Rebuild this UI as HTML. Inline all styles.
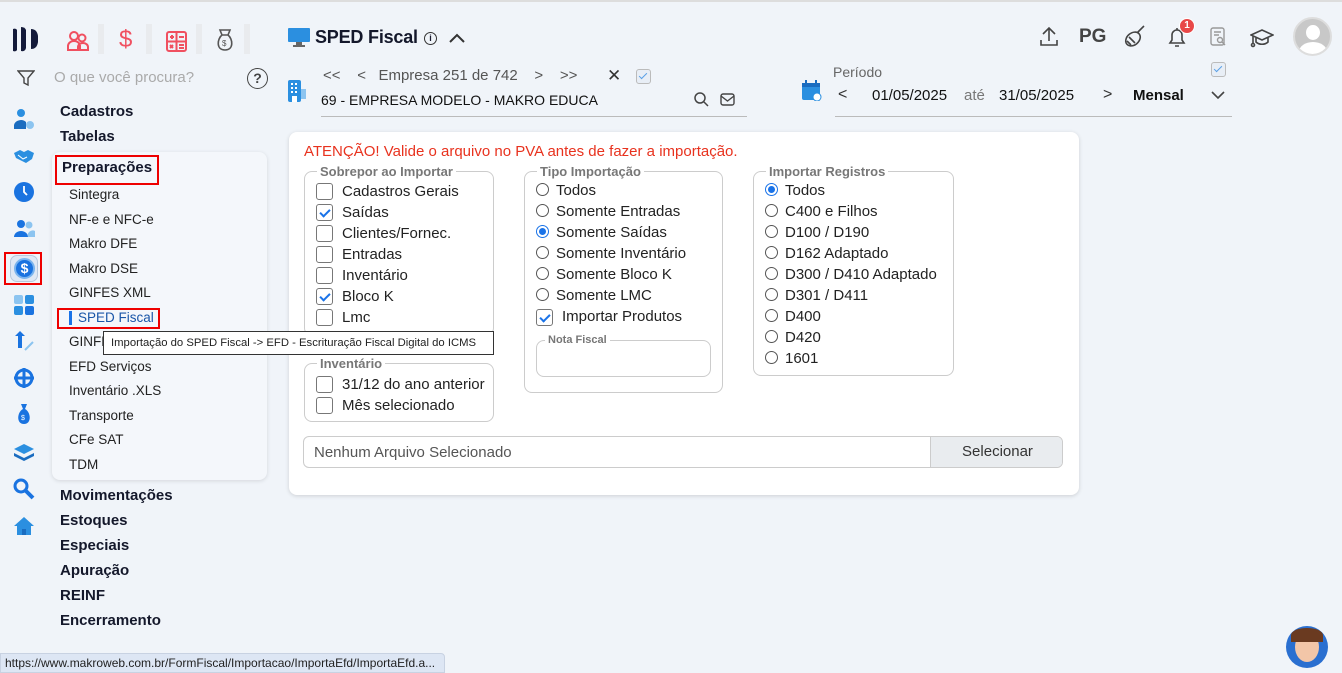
<!DOCTYPE html>
<html><head><meta charset="utf-8"><style>
*{box-sizing:border-box;margin:0;padding:0}
body{width:1342px;height:673px;overflow:hidden;background:#f0f4f9;font-family:"Liberation Sans",sans-serif;color:#1a1a2e;position:relative}
.a{position:absolute;white-space:nowrap}
.b{font-weight:bold;font-size:15px;color:#14182b}
.m{font-size:13.5px;color:#222}
.ic{position:absolute;left:13px;width:22px;height:22px}
.cb{position:absolute;width:17px;height:17px;border:1px solid #777;border-radius:3px;background:#fff}
.cb.k::after{content:"";position:absolute;left:5px;top:2px;width:4px;height:8px;border:solid #1a73e8;border-width:0 2px 2px 0;transform:rotate(45deg)}
.rd{position:absolute;width:13px;height:13px;border:1px solid #555;border-radius:50%;background:#fff}
.rd.k{border-color:#1a73e8}
.rd.k::after{content:"";position:absolute;left:2px;top:2px;width:7px;height:7px;border-radius:50%;background:#1a73e8}
.f{font-size:15px;color:#222}
fieldset{position:absolute;border:1px solid #ccc;border-radius:8px}
legend{font-size:13px;font-weight:bold;color:#777;padding:0 3px;margin-left:12px}
</style></head><body>
<div class="a" style="left:0;top:0;width:1342px;height:2px;background:#ddd"></div>
<!-- logo -->
<svg class="a" style="left:12px;top:26px" width="27" height="26" viewBox="0 0 27 26" fill="#141a3a"><path d="M1 3q3-1 4 1v20q-1 2-4 1z"/><path d="M9 1q4 0 5 3v18q-1 4-5 3z"/><path d="M19 3q6 0 7 7v6q-1 7-7 7z"/></svg>
<!-- top module icons -->
<div class="a" style="left:98px;top:24px;width:6px;height:30px;background:#e9ebee"></div>
<div class="a" style="left:146px;top:24px;width:6px;height:30px;background:#e9ebee"></div>
<div class="a" style="left:196px;top:24px;width:6px;height:30px;background:#e9ebee"></div>
<div class="a" style="left:244px;top:24px;width:6px;height:30px;background:#e9ebee"></div>
<svg class="a" style="left:66px;top:30px" width="24" height="22" viewBox="0 0 24 22" fill="none" stroke="#f05060" stroke-width="2"><circle cx="8" cy="6" r="4"/><circle cx="16" cy="8" r="3.5"/><path d="M2 20v-4a6 5 0 0 1 12 0v4zM12 20v-3a5 4 0 0 1 10 0v3z"/></svg>
<div class="a" style="left:119px;top:26px;font-size:24px;color:#f05060">$</div>
<svg class="a" style="left:166px;top:31px" width="21" height="21" viewBox="0 0 21 21" fill="none" stroke="#f05060" stroke-width="2"><rect x="1" y="1" width="19" height="19" rx="2"/><path d="M10.5 1v19M1 10.5h19M4 6h4M6 4v4M13 6h5M4 14l3 3M7 14l-3 3M13 14h5M13 17h5"/></svg>
<svg class="a" style="left:215px;top:29px" width="20" height="23" viewBox="0 0 20 23" fill="none" stroke="#555" stroke-width="1.6"><path d="M7 6L5 1h10l-2 5M7 6h6M7 6c-5 4-6 15 3 15s8-11 3-15"/><text x="7" y="17" font-size="8" fill="#555" stroke="none">$</text></svg>
<!-- title -->
<svg class="a" style="left:288px;top:28px" width="22" height="20" viewBox="0 0 22 20"><rect x="0" y="0" width="22" height="14" rx="1" fill="#2b8fe0"/><rect x="8" y="14" width="6" height="3" fill="#666"/><rect x="5" y="17" width="12" height="2" fill="#666"/></svg>
<div class="a" style="left:315px;top:27px;font-size:18px;font-weight:bold;color:#14182b;letter-spacing:-0.2px">SPED Fiscal</div>
<div class="a" style="left:424px;top:32px;width:13px;height:13px;border:1.3px solid #333;border-radius:50%;font-size:9px;text-align:center;line-height:11px;font-weight:bold">i</div>
<svg class="a" style="left:448px;top:32px" width="18" height="12" viewBox="0 0 18 12" fill="none" stroke="#333" stroke-width="2"><path d="M2 10l7-7 7 7"/></svg>
<!-- search -->
<svg class="a" style="left:17px;top:70px" width="18" height="17" viewBox="0 0 18 17" fill="none" stroke="#444" stroke-width="1.4"><path d="M1 1h16l-6 7v7l-4-2V8z"/></svg>
<div class="a" style="left:54px;top:69px;font-size:15px;color:#aaa">O que você procura?</div>
<div class="a" style="left:247px;top:68px;width:21px;height:21px;border:1.6px solid #444;border-radius:50%;text-align:center;font-size:14px;line-height:18px;color:#444;font-weight:bold">?</div>
<!-- empresa -->
<svg class="a" style="left:288px;top:80px" width="18" height="22" viewBox="0 0 18 22"><rect x="0" y="0" width="13" height="22" rx="2" fill="#2b8fe0"/><rect x="13" y="9" width="5" height="10" fill="#8cc4f0"/><g fill="#fff"><rect x="3" y="3" width="2" height="2"/><rect x="7" y="3" width="2" height="2"/><rect x="3" y="7" width="2" height="2"/><rect x="7" y="7" width="2" height="2"/><rect x="3" y="11" width="2" height="2"/><rect x="7" y="11" width="2" height="2"/><rect x="4" y="16" width="5" height="6"/></g></svg>
<div class="a" style="left:323px;top:67px;font-size:15px;color:#555">&lt;&lt;&nbsp;&nbsp;&nbsp;&nbsp;&lt;&nbsp;&nbsp;&nbsp;Empresa 251 de 742&nbsp;&nbsp;&nbsp;&nbsp;&gt;&nbsp;&nbsp;&nbsp;&nbsp;&gt;&gt;</div>
<div class="a" style="left:607px;top:66px;font-size:17px;color:#333">✕</div>
<div class="a" style="left:636px;top:69px;width:15px;height:15px;border:1px solid #bbb;border-radius:3px;background:#e8eef6"></div>
<div class="a" style="left:641px;top:71px;width:4px;height:8px;border:solid #5aa0e6;border-width:0 1.5px 1.5px 0;transform:rotate(45deg)"></div>
<div class="a" style="left:321px;top:92px;font-size:14px;color:#111">69 - EMPRESA MODELO - MAKRO EDUCA</div>
<svg class="a" style="left:694px;top:92px" width="15" height="15" viewBox="0 0 15 15" fill="none" stroke="#444" stroke-width="1.5"><circle cx="6" cy="6" r="5"/><path d="M10 10l4 4"/></svg>
<svg class="a" style="left:720px;top:93px" width="15" height="13" viewBox="0 0 15 13" fill="none" stroke="#444" stroke-width="1.4"><rect x="1" y="1" width="13" height="11" rx="2"/><path d="M1 3l6.5 5L14 3"/></svg>
<div class="a" style="left:321px;top:116px;width:426px;height:1px;background:#bbb"></div>
<!-- periodo -->
<svg class="a" style="left:802px;top:80px" width="20" height="21" viewBox="0 0 20 21"><rect x="0" y="3" width="18" height="17" rx="2" fill="#2b8fe0"/><rect x="0" y="3" width="18" height="4" fill="#1a6cc0"/><rect x="3" y="0" width="2" height="5" fill="#1a6cc0"/><rect x="13" y="0" width="2" height="5" fill="#1a6cc0"/><circle cx="15" cy="17" r="4" fill="#fff" stroke="#2b8fe0"/></svg>
<div class="a" style="left:833px;top:64px;font-size:14px;color:#666">Período</div>
<div class="a" style="left:1211px;top:62px;width:15px;height:15px;border:1px solid #bbb;border-radius:3px;background:#e8eef6"></div>
<div class="a" style="left:1216px;top:64px;width:4px;height:8px;border:solid #5aa0e6;border-width:0 1.5px 1.5px 0;transform:rotate(45deg)"></div>
<div class="a" style="left:838px;top:86px;font-size:16px;color:#333">&lt;</div>
<div class="a" style="left:872px;top:87px;font-size:15px;color:#111">01/05/2025</div>
<div class="a" style="left:964px;top:87px;font-size:15px;color:#777">até</div>
<div class="a" style="left:999px;top:87px;font-size:15px;color:#111">31/05/2025</div>
<div class="a" style="left:1103px;top:86px;font-size:16px;color:#333">&gt;</div>
<div class="a" style="left:1133px;top:87px;font-size:15px;color:#111;font-weight:bold">Mensal</div>
<svg class="a" style="left:1210px;top:90px" width="16" height="10" viewBox="0 0 16 10" fill="none" stroke="#444" stroke-width="1.6"><path d="M2 2l6 6 6-6"/></svg>
<div class="a" style="left:835px;top:116px;width:397px;height:1px;background:#bbb"></div>
<!-- top right icons -->
<svg class="a" style="left:1039px;top:26px" width="20" height="20" viewBox="0 0 20 20" fill="none" stroke="#444" stroke-width="1.6"><path d="M10 15V2M4 8l6-6 6 6M2 14v5h16v-5"/></svg>
<div class="a" style="left:1079px;top:26px;font-size:19px;color:#444;font-weight:bold">PG</div>
<svg class="a" style="left:1123px;top:25px" width="24" height="24" viewBox="0 0 24 24" fill="none" stroke="#444" stroke-width="1.6"><ellipse cx="10" cy="14" rx="8" ry="6" transform="rotate(-40 10 14)"/><path d="M14 8l7-7M6 12l6 6M4 16l4 4"/></svg>
<svg class="a" style="left:1167px;top:26px" width="20" height="22" viewBox="0 0 20 22" fill="none" stroke="#444" stroke-width="1.6"><path d="M3 17h14l-2-3V9a5 5 0 0 0-10 0v5zM8 20h4M10 2v2"/></svg>
<div class="a" style="left:1179px;top:18px;width:16px;height:16px;background:#e84848;border:1.5px solid #fff;border-radius:50%;color:#fff;font-size:10px;font-weight:bold;text-align:center;line-height:13px">1</div>
<svg class="a" style="left:1210px;top:27px" width="17" height="20" viewBox="0 0 17 20" fill="none" stroke="#999" stroke-width="1.4"><rect x="1" y="1" width="13" height="17" rx="2"/><path d="M4 5h7M4 8h5"/><circle cx="10" cy="13" r="2.5"/><path d="M12 15l3 3"/></svg>
<svg class="a" style="left:1250px;top:28px" width="24" height="20" viewBox="0 0 24 20" fill="none" stroke="#444" stroke-width="1.6"><path d="M1 7l11-5 11 5-11 5zM6 9v5c3 3 9 3 12 0V9M3 8v8"/><circle cx="3" cy="17" r="1.5"/></svg>
<div class="a" style="left:1293px;top:17px;width:39px;height:39px;border-radius:50%;background:#c8c8c8;border:2px solid #ddd;overflow:hidden"><div class="a" style="left:11px;top:6px;width:14px;height:15px;border-radius:50%;background:#fff"></div><div class="a" style="left:4px;top:23px;width:28px;height:20px;border-radius:50% 50% 0 0;background:#fff"></div></div>
<!-- left icon rail -->
<svg class="ic" style="top:108px" viewBox="0 0 22 22"><circle cx="8" cy="5" r="4" fill="#2b8fe0"/><path d="M1 21v-4a7 6 0 0 1 12-3v7z" fill="#1a6cc0"/><circle cx="17" cy="17" r="4" fill="#8cc4f0"/></svg>
<svg class="ic" style="top:145px" viewBox="0 0 22 22"><path d="M1 8l6-3 4 2 4-2 6 3-2 6-6 4-6-3-4-2z" fill="#2b8fe0"/><path d="M5 10l5 4 4-2" stroke="#fff" stroke-width="1" fill="none"/></svg>
<svg class="ic" style="top:181px" viewBox="0 0 22 22"><circle cx="11" cy="11" r="10" fill="#1a73e0"/><path d="M11 5v6l3 3" stroke="#fff" stroke-width="1.8" fill="none"/></svg>
<svg class="ic" style="top:218px" viewBox="0 0 22 22"><circle cx="8" cy="6" r="4" fill="#1a73e0"/><circle cx="16" cy="7" r="3.5" fill="#8cc4f0"/><path d="M1 19a7 6 0 0 1 14 0z" fill="#1a73e0"/><path d="M15 19a5 5 0 0 1 7-6v6z" fill="#8cc4f0"/></svg>
<div class="a" style="left:4px;top:252px;width:38px;height:33px;border:2.5px solid #e00;"></div>
<div class="a" style="left:10px;top:255px;width:28px;height:27px;border-radius:7px;background:#dfe8f4;border:1px solid #b8c8dc"></div>
<div class="a" style="left:14px;top:258px;width:21px;height:21px;border-radius:50%;background:#1a73e0;border:2px solid #7ab4ee;color:#fff;font-size:14px;font-weight:bold;text-align:center;line-height:17px">$</div>
<svg class="ic" style="top:294px" viewBox="0 0 22 22"><rect x="1" y="1" width="9" height="9" rx="2" fill="#8cc4f0"/><rect x="12" y="1" width="9" height="9" rx="2" fill="#2b8fe0"/><rect x="1" y="12" width="9" height="9" rx="2" fill="#2b8fe0"/><rect x="12" y="12" width="9" height="9" rx="2" fill="#1a73e0"/></svg>
<svg class="ic" style="top:330px" viewBox="0 0 22 22"><path d="M7 1l5 5h-3v12H5V6H2z" fill="#1a73e0"/><path d="M12 20l8-8" stroke="#8cc4f0" stroke-width="2"/></svg>
<svg class="ic" style="top:367px" viewBox="0 0 22 22"><circle cx="11" cy="11" r="8" fill="none" stroke="#1a73e0" stroke-width="3"/><path d="M11 1v20M1 11h20" stroke="#1a73e0" stroke-width="3"/></svg>
<svg class="ic" style="top:403px" viewBox="0 0 22 22"><path d="M8 1h6l-2 5c6 3 7 15-1 15S4 9 10 6z" fill="#1a73e0"/><text x="8" y="17" font-size="7" fill="#fff">$</text></svg>
<svg class="ic" style="top:441px" viewBox="0 0 22 22"><path d="M11 3l10 5-10 5-10-5z" fill="#2b8fe0"/><path d="M1 12l10 5 10-5v3l-10 5-10-5z" fill="#1a6cc0"/></svg>
<svg class="ic" style="top:478px" viewBox="0 0 22 22"><circle cx="8" cy="8" r="6" fill="none" stroke="#1a73e0" stroke-width="3"/><path d="M12 12l8 8" stroke="#1a73e0" stroke-width="4"/></svg>
<svg class="ic" style="top:515px" viewBox="0 0 22 22"><path d="M11 2l10 9h-3v9H4v-9H1z" fill="#2b8fe0"/><rect x="9" y="14" width="4" height="6" fill="#1a6cc0"/></svg>
<!-- menu -->
<div class="a b" style="left:60px;top:103px">Cadastros</div>
<div class="a b" style="left:60px;top:128px">Tabelas</div>
<div class="a" style="left:52px;top:152px;width:215px;height:328px;background:#f4f7fb;border-radius:8px;box-shadow:0 1px 4px rgba(0,0,0,.12)"></div>
<div class="a" style="left:55px;top:155px;width:104px;height:30px;border:2.5px solid #e00"></div>
<div class="a b" style="left:62px;top:159px">Preparações</div>
<div class="a m" style="left:69px;top:187px">Sintegra</div>
<div class="a m" style="left:69px;top:212px">NF-e e NFC-e</div>
<div class="a m" style="left:69px;top:236px">Makro DFE</div>
<div class="a m" style="left:69px;top:261px">Makro DSE</div>
<div class="a m" style="left:69px;top:285px">GINFES XML</div>
<div class="a" style="left:57px;top:308px;width:103px;height:21px;border:2.5px solid #e00"></div>
<div class="a" style="left:69px;top:311px;width:3px;height:14px;background:#1a73e8"></div>
<div class="a m" style="left:78px;top:310px;color:#1a56a8">SPED Fiscal</div>
<div class="a m" style="left:69px;top:334px">GINFES</div>
<div class="a m" style="left:69px;top:359px">EFD Serviços</div>
<div class="a m" style="left:69px;top:383px">Inventário .XLS</div>
<div class="a m" style="left:69px;top:408px">Transporte</div>
<div class="a m" style="left:69px;top:432px">CFe SAT</div>
<div class="a m" style="left:69px;top:457px">TDM</div>
<div class="a b" style="left:60px;top:487px">Movimentações</div>
<div class="a b" style="left:60px;top:512px">Estoques</div>
<div class="a b" style="left:60px;top:537px">Especiais</div>
<div class="a b" style="left:60px;top:562px">Apuração</div>
<div class="a b" style="left:60px;top:587px">REINF</div>
<div class="a b" style="left:60px;top:612px">Encerramento</div>
<!-- main card -->
<div class="a" style="left:289px;top:132px;width:790px;height:363px;background:#fff;border-radius:8px;box-shadow:0 1px 4px rgba(0,0,0,.15)"></div>
<div class="a" style="left:304px;top:143px;font-size:15px;color:#e8321e">ATENÇÃO! Valide o arquivo no PVA antes de fazer a importação.</div>
<fieldset style="left:304px;top:164px;width:190px;height:172px"><legend>Sobrepor ao Importar</legend></fieldset>
<div class="cb" style="left:316px;top:183px"></div><div class="a f" style="left:342px;top:183px">Cadastros Gerais</div>
<div class="cb k" style="left:316px;top:204px"></div><div class="a f" style="left:342px;top:204px">Saídas</div>
<div class="cb" style="left:316px;top:225px"></div><div class="a f" style="left:342px;top:225px">Clientes/Fornec.</div>
<div class="cb" style="left:316px;top:246px"></div><div class="a f" style="left:342px;top:246px">Entradas</div>
<div class="cb" style="left:316px;top:267px"></div><div class="a f" style="left:342px;top:267px">Inventário</div>
<div class="cb k" style="left:316px;top:288px"></div><div class="a f" style="left:342px;top:288px">Bloco K</div>
<div class="cb" style="left:316px;top:309px"></div><div class="a f" style="left:342px;top:309px">Lmc</div>
<fieldset style="left:304px;top:356px;width:190px;height:66px"><legend>Inventário</legend></fieldset>
<div class="cb" style="left:316px;top:376px"></div><div class="a f" style="left:342px;top:376px">31/12 do ano anterior</div>
<div class="cb" style="left:316px;top:397px"></div><div class="a f" style="left:342px;top:397px">Mês selecionado</div>
<fieldset style="left:524px;top:164px;width:199px;height:229px"><legend>Tipo Importação</legend></fieldset>
<div class="rd" style="left:536px;top:183px"></div><div class="a f" style="left:556px;top:182px">Todos</div>
<div class="rd" style="left:536px;top:204px"></div><div class="a f" style="left:556px;top:203px">Somente Entradas</div>
<div class="rd k" style="left:536px;top:225px"></div><div class="a f" style="left:556px;top:224px">Somente Saídas</div>
<div class="rd" style="left:536px;top:246px"></div><div class="a f" style="left:556px;top:245px">Somente Inventário</div>
<div class="rd" style="left:536px;top:267px"></div><div class="a f" style="left:556px;top:266px">Somente Bloco K</div>
<div class="rd" style="left:536px;top:288px"></div><div class="a f" style="left:556px;top:287px">Somente LMC</div>
<div class="cb k" style="left:536px;top:309px"></div><div class="a f" style="left:562px;top:308px">Importar Produtos</div>
<fieldset style="left:536px;top:334px;width:175px;height:43px"><legend style="font-size:11px;margin-left:8px">Nota Fiscal</legend></fieldset>
<fieldset style="left:753px;top:164px;width:201px;height:212px"><legend>Importar Registros</legend></fieldset>
<div class="rd k" style="left:765px;top:183px"></div><div class="a f" style="left:785px;top:182px">Todos</div>
<div class="rd" style="left:765px;top:204px"></div><div class="a f" style="left:785px;top:203px">C400 e Filhos</div>
<div class="rd" style="left:765px;top:225px"></div><div class="a f" style="left:785px;top:224px">D100 / D190</div>
<div class="rd" style="left:765px;top:246px"></div><div class="a f" style="left:785px;top:245px">D162 Adaptado</div>
<div class="rd" style="left:765px;top:267px"></div><div class="a f" style="left:785px;top:266px">D300 / D410 Adaptado</div>
<div class="rd" style="left:765px;top:288px"></div><div class="a f" style="left:785px;top:287px">D301 / D411</div>
<div class="rd" style="left:765px;top:309px"></div><div class="a f" style="left:785px;top:308px">D400</div>
<div class="rd" style="left:765px;top:330px"></div><div class="a f" style="left:785px;top:329px">D420</div>
<div class="rd" style="left:765px;top:351px"></div><div class="a f" style="left:785px;top:350px">1601</div>
<div class="a" style="left:303px;top:436px;width:760px;height:32px;border:1px solid #ccc;border-radius:6px;overflow:hidden;background:#fff">
<div class="a" style="left:10px;top:7px;font-size:15px;color:#555">Nenhum Arquivo Selecionado</div>
<div class="a" style="left:626px;top:0;width:134px;height:32px;background:#e9ecef;border-left:1px solid #ccc;text-align:center;line-height:30px;font-size:15px;color:#333">Selecionar</div></div>
<!-- tooltip -->
<div class="a" style="left:103px;top:331px;width:391px;height:24px;background:#fff;border:1px solid #333;font-size:11.3px;color:#222;line-height:22px;padding-left:7px;overflow:hidden">Importação do SPED Fiscal -&gt; EFD - Escrituração Fiscal Digital do ICMS</div>
<!-- status -->
<div class="a" style="left:0;top:653px;width:445px;height:20px;background:#dde6f4;border:1px solid #c8d2e2;border-radius:0 4px 0 0;font-size:12px;color:#222;line-height:18px;padding-left:4px">https://www.makroweb.com.br/FormFiscal/Importacao/ImportaEfd/ImportaEfd.a...</div>
<div class="a" style="left:1286px;top:626px;width:42px;height:42px;border-radius:50%;background:#2a6fd0;overflow:hidden"><div class="a" style="left:9px;top:6px;width:24px;height:30px;border-radius:50%;background:#f3c6a8"></div><div class="a" style="left:5px;top:2px;width:32px;height:14px;border-radius:50% 50% 0 0;background:#6a3a20"></div></div>
</body></html>
